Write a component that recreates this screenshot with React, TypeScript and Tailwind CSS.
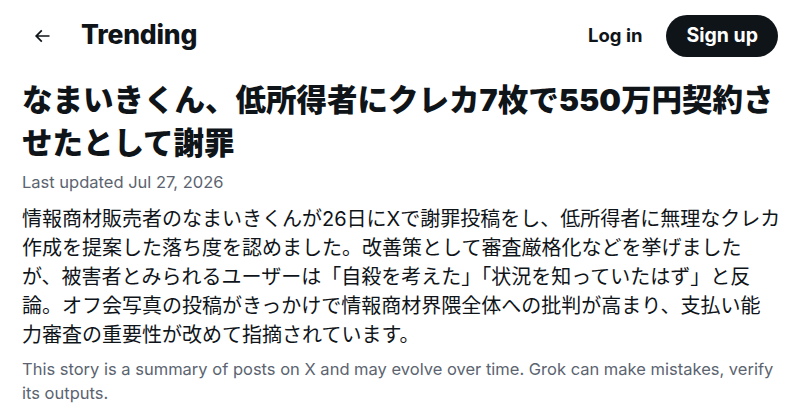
import React from "react";

const font = "font-['Inter','Noto_Sans_CJK_JP',sans-serif]";

export default function App() {
  return (
    <div className={`w-[800px] h-[413px] bg-white overflow-hidden text-[#0f1419] ${font}`}>
      {/* Header */}
      <header className="h-[72px] flex items-center justify-between pl-[32px] pr-[22px]">
        <div className="flex items-center gap-[29px]">
          <svg viewBox="0 0 24 24" className="w-[20px] h-[20px]" fill="#0f1419">
            <path d="M7.414 13l5.043 5.04-1.414 1.42L3.586 12l7.457-7.46 1.414 1.42L7.414 11H21v2H7.414z" />
          </svg>
          <h1 className="text-[26.5px] font-extrabold tracking-[-0.2px] -mt-[2px]">Trending</h1>
        </div>
        <div className="flex items-center gap-[24px]">
          <button className="text-[18.5px] font-bold">Log in</button>
          <button className="h-[42px] px-[20px] rounded-full bg-[#0f1419] text-white text-[19.5px] font-bold">
            Sign up
          </button>
        </div>
      </header>

      <main className="pt-[6px] pl-[22px] pr-[8px]">
        <h2 className="text-[30.5px] leading-[43px] font-black">
          なまいきくん、低所得者にクレカ7枚で550万円契約さ
          <br />
          せたとして謝罪
        </h2>
        <p className="mt-[6px] text-[16.5px] leading-[24px] text-[#5b6470]">Last updated Jul 27, 2026</p>
        <p className="mt-[11px] text-[20px] leading-[29px] text-[#0f1419]">
          情報商材販売者のなまいきくんが26日にXで謝罪投稿をし、低所得者に無理なクレカ
          <br />
          作成を提案した落ち度を認めました。改善策として審査厳格化などを挙げました
          <br />
          が、被害者とみられるユーザーは「自殺を考えた」「状況を知っていたはず」と反
          <br />
          論。オフ会写真の投稿がきっかけで情報商材界隈全体への批判が高まり、支払い能
          <br />
          力審査の重要性が改めて指摘されています。
        </p>
        <p className="mt-[7px] text-[16.5px] leading-[24px] text-[#5b6470]">
          This story is a summary of posts on X and may evolve over time. Grok can make mistakes, verify
          <br />
          its outputs.
        </p>
      </main>
    </div>
  );
}
